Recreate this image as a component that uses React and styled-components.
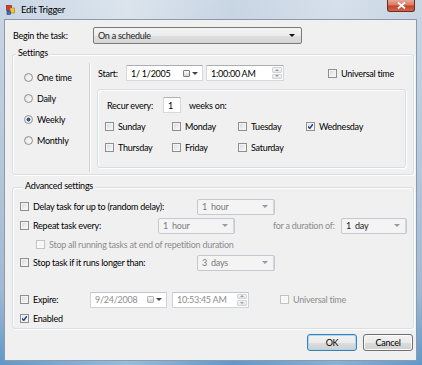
import styled, { createGlobalStyle } from "styled-components"

const Global = createGlobalStyle`
  html, body { margin: 0; padding: 0; }
  body {
    width: 422px;
    height: 365px;
    overflow: hidden;
    font-family: Lato, "Liberation Sans", sans-serif;
    font-size: 9px;
    letter-spacing: -0.25px;
    color: #000;
  }
`

export default function App() {
    return (
        <>
            <Global />
            <Window>
                <TitleBar>
                    <AppIcon />
                    <Title>Edit Trigger</Title>
                    <CloseButton>
                        <svg width="9" height="7" viewBox="0 0 9 7">
                            <path d="M1 0.5 L8 6.5 M8 0.5 L1 6.5" stroke="#fff" strokeWidth="1.8" />
                        </svg>
                    </CloseButton>
                </TitleBar>
                <Client>
                    <Row $h={16}>
                        <Text $w={80} $ml={1}>Begin the task:</Text>
                        <Combo $w={209} $active>
                            <span>On a schedule</span>
                            <Arrow $dark />
                        </Combo>
                    </Row>

                    <GroupBox $mt={11}>
                        <Caption>Settings</Caption>
                        <SettingsBody>
                            <RadioColumn>
                                {modos.map((m) =>
                                    <RadioRow key={m}>
                                        <Radio $on={m === "Weekly"} />
                                        {m}
                                    </RadioRow>
                                )}
                            </RadioColumn>
                            <RightColumn>
                                <Row $h={16}>
                                    <Text $w={28} $ml={1}>Start:</Text>
                                    <DateBox $w={77} value="1/  1/2005" />
                                    <TimeBox $w={78} $ml={3} value="1:00:00 AM" />
                                    <CheckItem $ml={44}>
                                        <CheckBox />
                                        Universal time
                                    </CheckItem>
                                </Row>
                                <RecurBox>
                                    <Row $h={16}>
                                        <Text $w={56}>Recur every:</Text>
                                        <Field $w={18}>1</Field>
                                        <Text $ml={8}>weeks on:</Text>
                                    </Row>
                                    <DayGrid>
                                        {dias.map((d) =>
                                            <CheckItem key={d}>
                                                <CheckBox $on={d === "Wednesday"} />
                                                {d}
                                            </CheckItem>
                                        )}
                                    </DayGrid>
                                </RecurBox>
                            </RightColumn>
                        </SettingsBody>
                    </GroupBox>

                    <GroupBox $mt={12} $pl={7}>
                        <Caption>Advanced settings</Caption>
                        <AdvRow $mt={5}>
                            <CheckItem $w={177}>
                                <CheckBox />
                                Delay task for up to (random delay):
                            </CheckItem>
                            <Combo $w={78} $off>
                                <span>1&nbsp; hour</span>
                                <Arrow />
                            </Combo>
                        </AdvRow>
                        <AdvRow>
                            <CheckItem $w={138}>
                                <CheckBox />
                                Repeat task every:
                            </CheckItem>
                            <Combo $w={77} $off>
                                <span>1&nbsp; hour</span>
                                <Arrow />
                            </Combo>
                            <Text $w={68} $ml={38} $gray>for a duration of:</Text>
                            <Combo $w={66} $off $darkText>
                                <span>1&nbsp; day</span>
                                <Arrow />
                            </Combo>
                        </AdvRow>
                        <AdvRow $h={18} $pl={16}>
                            <CheckItem $gray>
                                <CheckBox $off />
                                Stop all running tasks at end of repetition duration
                            </CheckItem>
                        </AdvRow>
                        <AdvRow>
                            <CheckItem $w={177}>
                                <CheckBox />
                                Stop task if it runs longer than:
                            </CheckItem>
                            <Combo $w={78} $off>
                                <span>3&nbsp; days</span>
                                <Arrow />
                            </Combo>
                        </AdvRow>
                        <AdvRow $mt={18}>
                            <CheckItem $w={70}>
                                <CheckBox />
                                Expire:
                            </CheckItem>
                            <DateBox $w={77} $off value="9/24/2008" />
                            <TimeBox $w={77} $ml={5} $off value="10:53:45 AM" />
                            <CheckItem $ml={31} $gray>
                                <CheckBox $off />
                                Universal time
                            </CheckItem>
                        </AdvRow>
                        <AdvRow>
                            <CheckItem>
                                <CheckBox $on />
                                Enabled
                            </CheckItem>
                        </AdvRow>
                    </GroupBox>

                    <Buttons>
                        <Button $default>OK</Button>
                        <Button>Cancel</Button>
                    </Buttons>
                </Client>
            </Window>
        </>
    )
}

const modos = ["One time", "Daily", "Weekly", "Monthly"]
const dias = ["Sunday", "Monday", "Tuesday", "Wednesday", "Thursday", "Friday", "Saturday"]

function AppIcon() {
    return (
        <svg width="9" height="10" viewBox="0 0 9 10">
            <rect x="0.5" y="0.5" width="5" height="5" fill="#d6362a" stroke="#8a1d15" strokeWidth="0.6" />
            <rect x="4" y="3" width="4.5" height="5" fill="#f4c631" stroke="#a37d12" strokeWidth="0.6" />
            <rect x="1" y="6" width="3.5" height="3.5" fill="#3474c9" stroke="#1c437a" strokeWidth="0.6" />
        </svg>
    )
}

function DateBox({ value, $w, $ml, $off }) {
    return (
        <Field $w={$w} $ml={$ml} $off={$off}>
            <FieldText $off={$off}>{value}</FieldText>
            <CalIcon $off={$off} />
            <Arrow $small />
        </Field>
    )
}

function TimeBox({ value, $w, $ml, $off }) {
    return (
        <Field $w={$w} $ml={$ml} $off={$off} $pr={1}>
            <FieldText $off={$off}>{value}</FieldText>
            <Spinner>
                <SpinHalf><Arrow $up $tiny /></SpinHalf>
                <SpinHalf><Arrow $tiny /></SpinHalf>
            </Spinner>
        </Field>
    )
}

const Window = styled.div`
  width: 422px;
  height: 365px;
  box-sizing: border-box;
  padding: 0 5px 4px 4px;
  display: flex;
  flex-direction: column;
  background:
    linear-gradient(90deg, rgba(255,255,255,0) 0%, rgba(255,255,255,0.35) 30%, rgba(255,255,255,0) 55%, rgba(255,255,255,0.25) 80%, rgba(255,255,255,0) 100%),
    linear-gradient(180deg, #c9d6e4 0%, #b7c9dc 40%, #9fb9d3 80%, #5f97c8 100%);
`
const TitleBar = styled.div`
  height: 19px;
  display: flex;
  align-items: center;
  padding-left: 2px;
`
const Title = styled.div`
  margin-left: 6px;
  font-size: 9.5px;
  color: #000;
`
const CloseButton = styled.div`
  margin-left: auto;
  margin-right: 2px;
  align-self: flex-start;
  width: 28px;
  height: 12px;
  box-sizing: border-box;
  border: 1px solid #6b2a22;
  border-top: none;
  border-radius: 0 0 3px 3px;
  background: linear-gradient(180deg, #e9a898 0%, #d97a64 45%, #c2432b 55%, #d4654a 100%);
  display: flex;
  align-items: center;
  justify-content: center;
`
const Client = styled.div`
  flex: 1;
  background: #f0f0f0;
  border: 1px solid #8c9aab;
  padding: 7px 1px 0 7px;
  display: flex;
  flex-direction: column;
`
const Row = styled.div`
  display: flex;
  align-items: center;
  height: ${(p) => p.$h}px;
`
const Text = styled.div`
  width: ${(p) => (p.$w ? p.$w + "px" : "auto")};
  margin-left: ${(p) => p.$ml || 0}px;
  flex-shrink: 0;
  white-space: nowrap;
  color: ${(p) => (p.$gray ? "#8d8d8d" : "#000")};
`
const Combo = styled.div`
  width: ${(p) => p.$w}px;
  height: ${(p) => (p.$active ? 17 : 16)}px;
  box-sizing: border-box;
  display: flex;
  align-items: center;
  justify-content: space-between;
  padding: 0 6px 0 4px;
  border-radius: 2px;
  white-space: nowrap;
  border: 1px solid ${(p) => (p.$active ? "#7a7a7a" : "#c5c8cc")};
  background: ${(p) => (p.$active
        ? "linear-gradient(180deg, #f4f4f4 0%, #ececec 50%, #dfdfdf 51%, #d6d6d6 100%)"
        : "#f4f4f4")};
  color: ${(p) => (p.$active || p.$darkText ? "#222" : "#7a7a7a")};
  box-shadow: ${(p) => (p.$off ? "inset -15px 0 0 -14px #d4d6da" : "none")};
`
const Arrow = styled.span`
  width: 0;
  height: 0;
  flex-shrink: 0;
  border-left: ${(p) => (p.$tiny ? 2 : 3)}px solid transparent;
  border-right: ${(p) => (p.$tiny ? 2 : 3)}px solid transparent;
  ${(p) => (p.$up ? "border-bottom" : "border-top")}: ${(p) => (p.$tiny ? 2 : 3)}px solid ${(p) => (p.$dark ? "#111" : p.$small ? "#444" : "#9a9a9a")};
  margin-left: ${(p) => (p.$small ? 2 : 0)}px;
`
const GroupBox = styled.div`
  margin-top: ${(p) => p.$mt}px;
  margin-right: 1px;
  border: 1px solid #d5dfe5;
  border-radius: 3px;
  box-shadow: inset 1px 1px 0 #fff, 1px 1px 0 #fff;
  padding-left: ${(p) => p.$pl || 0}px;
  display: flex;
  flex-direction: column;
`
const Caption = styled.div`
  margin: -8px 0 0 3px;
  padding: 0 2px;
  width: fit-content;
  line-height: 12px;
  background: #f0f0f0;
  color: #000;
`
const SettingsBody = styled.div`
  display: flex;
  height: 109px;
  margin-top: 4px;
  margin-bottom: 2px;
`
const RadioColumn = styled.div`
  width: 77px;
  box-sizing: border-box;
  padding: 4px 0 0 11px;
  border-right: 1px solid #cdd2d8;
  box-shadow: 1px 0 0 #fff;
`
const RadioRow = styled.div`
  height: 21px;
  display: flex;
  align-items: center;
  gap: 4px;
`
const Radio = styled.span`
  width: 9px;
  height: 9px;
  box-sizing: border-box;
  border-radius: 50%;
  border: 1px solid #929292;
  background: ${(p) => (p.$on
        ? "radial-gradient(circle, #2b6cb0 0%, #1d4f86 35%, #e9e9e9 45%, #f7f7f7 100%)"
        : "radial-gradient(circle at 60% 60%, #f8f8f8 0%, #dcdcdc 100%)")};
`
const RightColumn = styled.div`
  padding: 2px 0 0 7px;
  display: flex;
  flex-direction: column;
`
const Field = styled.div`
  width: ${(p) => p.$w}px;
  height: 16px;
  margin-left: ${(p) => p.$ml || 0}px;
  box-sizing: border-box;
  flex-shrink: 0;
  display: flex;
  align-items: center;
  padding: 0 ${(p) => (p.$pr !== undefined ? p.$pr : 4)}px 0 4px;
  background: #fff;
  border: 1px solid ${(p) => (p.$off ? "#cfd2d6" : "#d4d7dc")};
  border-top-color: ${(p) => (p.$off ? "#c3c6cb" : "#abadb3")};
  border-radius: 1px;
  color: #000;
`
const FieldText = styled.span`
  flex: 1;
  white-space: nowrap;
  color: ${(p) => (p.$off ? "#8d8d8d" : "#000")};
`
const CalIcon = styled.span`
  width: 7px;
  height: 7px;
  box-sizing: border-box;
  border: 1px solid ${(p) => (p.$off ? "#b5b5b5" : "#7c7c7c")};
  border-radius: 1px;
  background: linear-gradient(180deg, #fafafa, #d6d6d6);
`
const Spinner = styled.div`
  width: 10px;
  height: 12px;
  display: flex;
  flex-direction: column;
  gap: 1px;
`
const SpinHalf = styled.div`
  flex: 1;
  display: flex;
  align-items: center;
  justify-content: center;
  border: 1px solid #d0d3d7;
  border-radius: 1px;
  background: linear-gradient(180deg, #f7f7f7, #e6e6e6);
`
const CheckItem = styled.div`
  display: flex;
  align-items: center;
  gap: 4px;
  flex-shrink: 0;
  white-space: nowrap;
  width: ${(p) => (p.$w ? p.$w + "px" : "auto")};
  margin-left: ${(p) => p.$ml || 0}px;
  color: ${(p) => (p.$gray ? "#8d8d8d" : "#000")};
`
const CheckBox = styled.span`
  width: 9px;
  height: 9px;
  box-sizing: border-box;
  flex-shrink: 0;
  border: 1px solid ${(p) => (p.$off ? "#c2c2c2" : "#8f8f8f")};
  background: ${(p) => (p.$off
        ? "#f6f6f6"
        : "linear-gradient(135deg, #d5d8dc 0%, #eceef0 60%, #fbfbfb 100%)")};
  box-shadow: inset 0 0 0 1px ${(p) => (p.$off ? "#fbfbfb" : "#f4f4f4")};
  ${(p) => p.$on && `
    background:
      url("data:image/svg+xml;utf8,<svg xmlns='http://www.w3.org/2000/svg' width='7' height='7' viewBox='0 0 7 7'><path d='M1 3.5 L2.8 5.5 L6 1' stroke='%23243f86' stroke-width='1.4' fill='none'/></svg>") center / 7px 7px no-repeat,
      linear-gradient(135deg, #d5d8dc 0%, #eceef0 60%, #fbfbfb 100%);
  `}
`
const RecurBox = styled.div`
  margin-top: 8px;
  width: 309px;
  height: 79px;
  box-sizing: border-box;
  border: 1px solid #d5dfe5;
  border-radius: 3px;
  box-shadow: inset 1px 1px 0 #fff, 1px 1px 0 #fff;
  padding: 7px 0 0 9px;
`
const DayGrid = styled.div`
  margin: 3px 0 0 -2px;
  display: grid;
  grid-template-columns: 67px 66px 68px auto;
  grid-auto-rows: 21px;
`
const AdvRow = styled.div`
  display: flex;
  align-items: center;
  height: ${(p) => p.$h || 19}px;
  margin-top: ${(p) => p.$mt || 0}px;
  padding-left: ${(p) => p.$pl || 0}px;
`
const Buttons = styled.div`
  margin-top: 5px;
  display: flex;
  justify-content: flex-end;
  gap: 6px;
  padding-right: 2px;
`
const Button = styled.div`
  width: 50px;
  height: 17px;
  box-sizing: border-box;
  display: flex;
  align-items: center;
  justify-content: center;
  border-radius: 3px;
  border: 1px solid ${(p) => (p.$default ? "#3c7fb1" : "#707070")};
  background: linear-gradient(180deg, #f2f2f2 0%, #ebebeb 50%, #dddddd 51%, #cfcfcf 100%);
  box-shadow: inset 0 0 0 1px ${(p) => (p.$default ? "#a7d9f5" : "#fcfcfc")};
  color: #000;
`
